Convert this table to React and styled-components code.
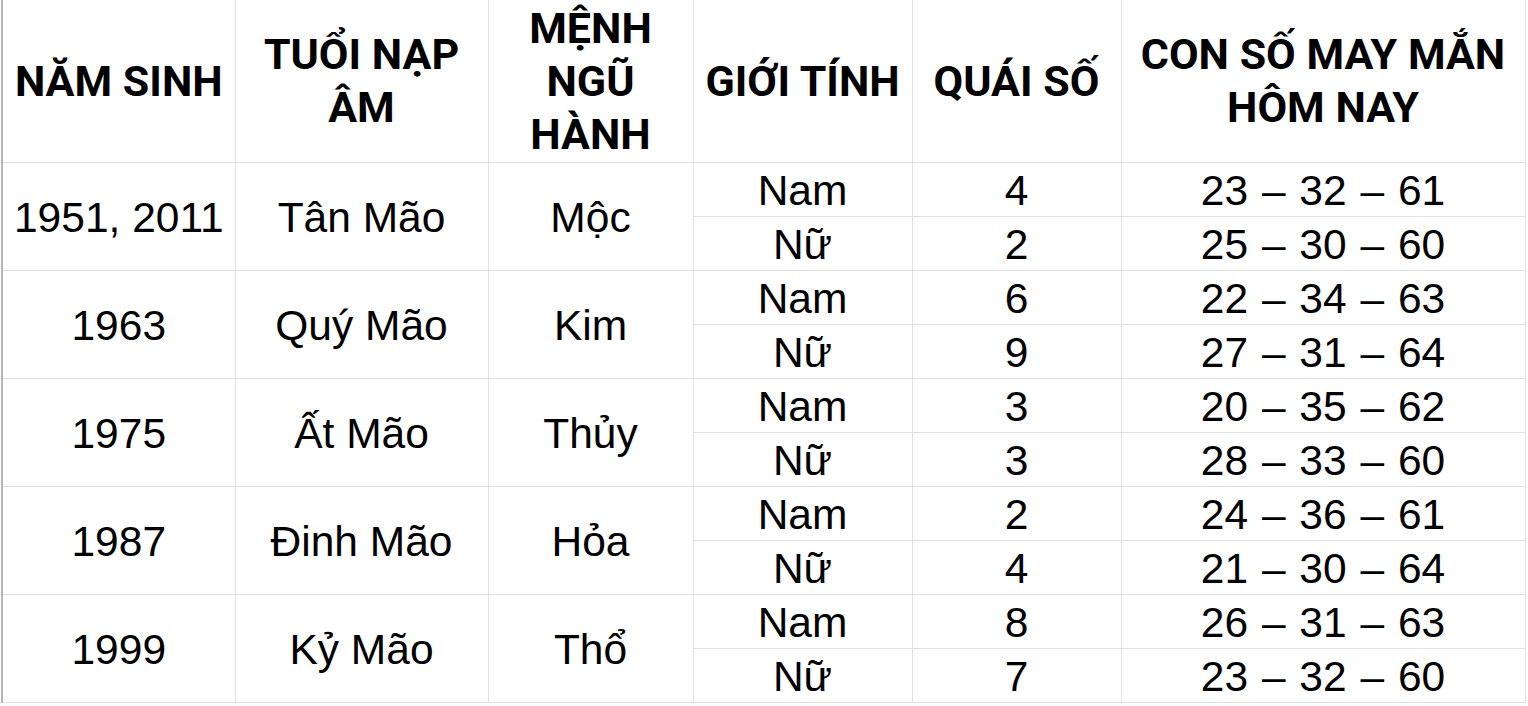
import React from "react";
import styled, { createGlobalStyle } from "styled-components";

const GlobalStyle = createGlobalStyle`
  html, body {
    margin: 0;
    padding: 0;
    background: #ffffff;
  }
  body {
    overflow: hidden;
  }
`;

const Sheet = styled.div`
  width: 1528px;
  height: 706px;
  overflow: hidden;
  padding-left: 1px;
  box-sizing: border-box;
`;

const Table = styled.table`
  border-collapse: collapse;
  table-layout: fixed;
  border-left: 2px solid #b5b5b5;
  color: #000;
`;

const Head = styled.th`
  height: 162px;
  padding: 0 6px;
  border-right: 1px solid #e1e1e1;
  border-bottom: 1px solid #e1e1e1;
  font-family: Roboto, "Liberation Sans", sans-serif;
  font-weight: 700;
  font-size: 43px;
  line-height: 53px;
  text-align: center;
  vertical-align: middle;
  overflow: hidden;
`;

const Cell = styled.td`
  height: 51px;
  padding: 2px 0 0;
  border-right: 1px solid #e1e1e1;
  border-bottom: 1px solid #e1e1e1;
  font-family: "Liberation Sans", Arial, sans-serif;
  font-size: 42.5px;
  line-height: 51px;
  text-align: center;
  vertical-align: middle;
  white-space: nowrap;
  word-spacing: ${({ $spread }) => ($spread ? "2px" : "0")};
`;

const columns = [
  { title: "NĂM SINH", width: 233 },
  { title: "TUỔI NẠP ÂM", width: 253 },
  { title: "MỆNH NGŨ HÀNH", width: 205 },
  { title: "GIỚI TÍNH", width: 219 },
  { title: "QUÁI SỐ", width: 209 },
  { title: "CON SỐ MAY MẮN HÔM NAY", width: 404 },
];

const groups = [
  {
    year: "1951, 2011",
    tuoi: "Tân Mão",
    menh: "Mộc",
    rows: [
      ["Nam", "4", "23 – 32 – 61"],
      ["Nữ", "2", "25 – 30 – 60"],
    ],
  },
  {
    year: "1963",
    tuoi: "Quý Mão",
    menh: "Kim",
    rows: [
      ["Nam", "6", "22 – 34 – 63"],
      ["Nữ", "9", "27 – 31 – 64"],
    ],
  },
  {
    year: "1975",
    tuoi: "Ất Mão",
    menh: "Thủy",
    rows: [
      ["Nam", "3", "20 – 35 – 62"],
      ["Nữ", "3", "28 – 33 – 60"],
    ],
  },
  {
    year: "1987",
    tuoi: "Đinh Mão",
    menh: "Hỏa",
    rows: [
      ["Nam", "2", "24 – 36 – 61"],
      ["Nữ", "4", "21 – 30 – 64"],
    ],
  },
  {
    year: "1999",
    tuoi: "Kỷ Mão",
    menh: "Thổ",
    rows: [
      ["Nam", "8", "26 – 31 – 63"],
      ["Nữ", "7", "23 – 32 – 60"],
    ],
  },
];

const App = () => (
  <Sheet>
    <GlobalStyle />
    <Table>
      <colgroup>
        {columns.map((c) => (
          <col key={c.title} style={{ width: c.width }} />
        ))}
      </colgroup>
      <thead>
        <tr>
          {columns.map((c) => (
            <Head key={c.title}>{c.title}</Head>
          ))}
        </tr>
      </thead>
      <tbody>
        {groups.map((g) =>
          g.rows.map((r, i) => (
            <tr key={g.year + r[0]}>
              {i === 0 && (
                <>
                  <Cell rowSpan={2}>{g.year}</Cell>
                  <Cell rowSpan={2}>{g.tuoi}</Cell>
                  <Cell rowSpan={2}>{g.menh}</Cell>
                </>
              )}
              <Cell>{r[0]}</Cell>
              <Cell>{r[1]}</Cell>
              <Cell $spread>{r[2]}</Cell>
            </tr>
          ))
        )}
      </tbody>
    </Table>
  </Sheet>
);

export default App;
